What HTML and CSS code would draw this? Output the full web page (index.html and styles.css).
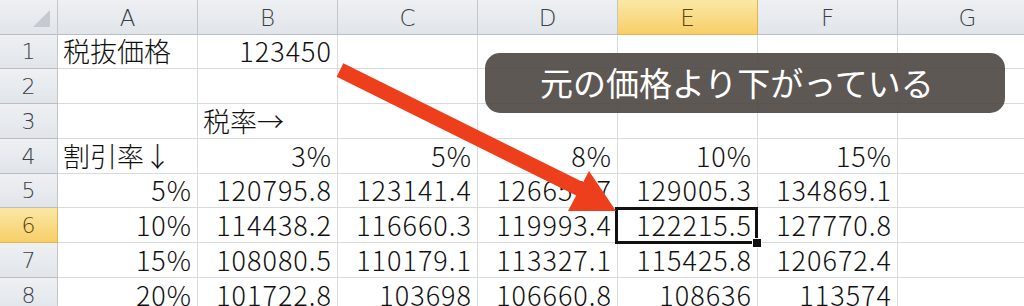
FILE: index.html
```html
<!DOCTYPE html>
<html lang="ja">
<head>
<meta charset="utf-8">
<link rel="stylesheet" href="styles.css">
</head>
<body>
<div class="sheet">
  <div class="grid">
    <div class="hd corner"><span class="tri"></span></div>
    <div class="hd col">A</div>
    <div class="hd col">B</div>
    <div class="hd col">C</div>
    <div class="hd col">D</div>
    <div class="hd col sel">E</div>
    <div class="hd col">F</div>
    <div class="hd col">G</div>

    <div class="hd row">1</div>
    <div class="c l">税抜価格</div>
    <div class="c">123450</div>
    <div class="c"></div><div class="c"></div><div class="c"></div><div class="c"></div><div class="c"></div>

    <div class="hd row">2</div>
    <div class="c"></div><div class="c"></div><div class="c"></div><div class="c"></div><div class="c"></div><div class="c"></div><div class="c"></div>

    <div class="hd row">3</div>
    <div class="c"></div>
    <div class="c l">税率→</div>
    <div class="c"></div><div class="c"></div><div class="c"></div><div class="c"></div><div class="c"></div>

    <div class="hd row">4</div>
    <div class="c l">割引率↓</div>
    <div class="c">3%</div>
    <div class="c">5%</div>
    <div class="c">8%</div>
    <div class="c">10%</div>
    <div class="c">15%</div>
    <div class="c"></div>

    <div class="hd row">5</div>
    <div class="c">5%</div>
    <div class="c">120795.8</div>
    <div class="c">123141.4</div>
    <div class="c">126659.7</div>
    <div class="c">129005.3</div>
    <div class="c">134869.1</div>
    <div class="c"></div>

    <div class="hd row sel">6</div>
    <div class="c">10%</div>
    <div class="c">114438.2</div>
    <div class="c">116660.3</div>
    <div class="c">119993.4</div>
    <div class="c">122215.5</div>
    <div class="c">127770.8</div>
    <div class="c"></div>

    <div class="hd row">7</div>
    <div class="c">15%</div>
    <div class="c">108080.5</div>
    <div class="c">110179.1</div>
    <div class="c">113327.1</div>
    <div class="c">115425.8</div>
    <div class="c">120672.4</div>
    <div class="c"></div>

    <div class="hd row">8</div>
    <div class="c">20%</div>
    <div class="c">101722.8</div>
    <div class="c">103698</div>
    <div class="c">106660.8</div>
    <div class="c">108636</div>
    <div class="c">113574</div>
    <div class="c"></div>
  </div>

  <div class="active"><span class="handle"></span></div>

  <svg class="arrow" width="1024" height="306" viewBox="0 0 1024 306">
    <line x1="340" y1="70" x2="584" y2="191" stroke="#ee3f1c" stroke-width="15" stroke-linecap="butt"/>
    <polygon points="616,211 568,211 589,171" fill="#ee3f1c"/>
  </svg>

  <div class="caption">元の価格より下がっている</div>
</div>
</body>
</html>
```

FILE: styles.css
```css
* { box-sizing: border-box; }
html, body { margin: 0; padding: 0; background: #ffffff; overflow: hidden; }
.sheet {
  position: relative;
  width: 1024px;
  height: 306px;
  overflow: hidden;
}
.grid {
  display: grid;
  grid-template-columns: 58px repeat(7, 140px);
  grid-template-rows: 35px 34px 35px 35px 35px 34px 35px 35px 35px;
  font-family: "Noto Sans CJK JP", "Noto Sans", sans-serif;
  font-weight: 300;
  color: #111;
}
.hd {
  background: linear-gradient(#eef0f3, #e1e5ea);
  border-right: 1px solid #c3c7cd;
  border-bottom: 1px solid #b9bdc4;
  color: #3a3f46;
  display: flex;
  align-items: center;
  justify-content: center;
  font-family: "DejaVu Sans", "Liberation Sans", sans-serif;
  font-weight: 300;
}
.col { font-size: 23px; padding-top: 2px; }
.row { font-size: 22px; }
.hd.sel {
  background: linear-gradient(#fbe7a6, #f7cf68);
  color: #5a4410;
  border-bottom-color: #e3b449;
  border-right-color: #e3b449;
}
.corner { position: relative; }
.tri {
  position: absolute;
  right: 7px;
  bottom: 7px;
  width: 0;
  height: 0;
  border-left: 17px solid transparent;
  border-bottom: 17px solid #c6cad0;
}
.c {
  border-right: 1px solid #d9dadc;
  border-bottom: 1px solid #d9dadc;
  font-size: 27px;
  line-height: 28px;
  letter-spacing: 1px;
  display: flex;
  align-items: flex-end;
  justify-content: flex-end;
  padding: 0 5px 3px 6px;
  white-space: nowrap;
}
.c.l { justify-content: flex-start; padding-left: 5px; letter-spacing: 0; }

.active {
  position: absolute;
  left: 615px;
  top: 207px;
  width: 143px;
  height: 37px;
  border: 3px solid #111;
}
.handle {
  position: absolute;
  right: -7px;
  bottom: -7px;
  width: 10px;
  height: 10px;
  background: #111;
  border: 1px solid #fff;
}
.arrow {
  position: absolute;
  left: 0;
  top: 0;
}
.caption {
  position: absolute;
  left: 485px;
  top: 53px;
  width: 520px;
  height: 60px;
  border-radius: 15px;
  background: rgba(76, 70, 66, 0.9);
  color: #ffffff;
  font-family: "Noto Sans CJK JP", "Noto Sans", sans-serif;
  font-size: 33px;
  font-weight: 400;
  display: flex;
  align-items: center;
  padding-left: 55px;
  padding-bottom: 2px;
}
```
